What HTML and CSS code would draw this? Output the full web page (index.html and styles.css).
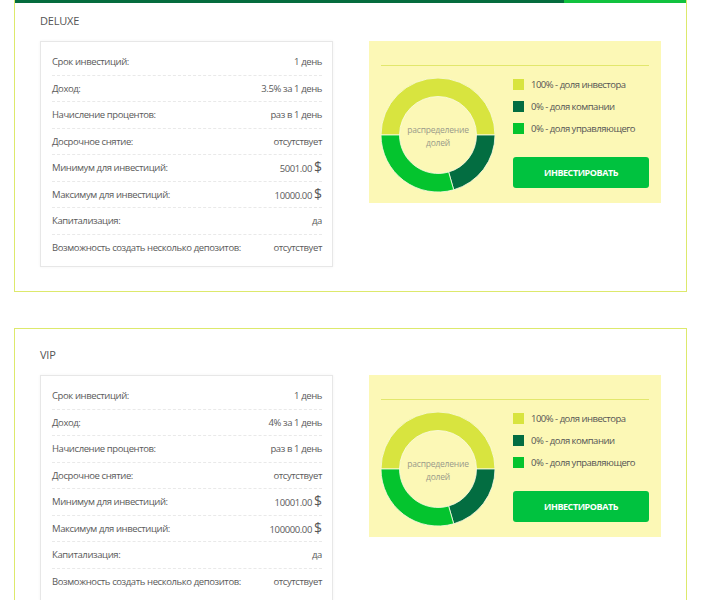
FILE: index.html
```html
<!DOCTYPE html>
<html lang="ru">
<head>
<meta charset="utf-8">
<title>Тарифы</title>
<link rel="stylesheet" href="styles.css">
</head>
<body>
<div class="page">
  <section class="card card-active">
    <div class="card-bar"></div>
    <h2 class="card-title">DELUXE</h2>
    <div class="card-body">
      <div class="specs">
        <div class="row"><span class="label">Срок инвестиций:</span><span class="value">1 день</span></div>
        <div class="row"><span class="label">Доход:</span><span class="value">3.5% за 1 день</span></div>
        <div class="row"><span class="label">Начисление процентов:</span><span class="value">раз в 1 день</span></div>
        <div class="row"><span class="label">Досрочное снятие:</span><span class="value">отсутствует</span></div>
        <div class="row"><span class="label">Минимум для инвестиций:</span><span class="value">5001.00 <span class="cur">$</span></span></div>
        <div class="row"><span class="label">Максимум для инвестиций:</span><span class="value">10000.00 <span class="cur">$</span></span></div>
        <div class="row"><span class="label">Капитализация:</span><span class="value">да</span></div>
        <div class="row"><span class="label">Возможность создать несколько депозитов:</span><span class="value">отсутствует</span></div>
      </div>
      <div class="share">
        <div class="share-head"></div>
        <div class="share-body">
          <div class="donut">
            <svg class="donut-svg" width="114" height="114" viewBox="0 0 114 114">
              <path class="seg-yellow" d="M0 57 A57 57 0 0 1 114 57 L95.5 57 A38.5 38.5 0 0 0 18.5 57 Z"/>
              <path class="seg-dark" d="M114 57 A57 57 0 0 1 72.71 111.79 L67.61 94.01 A38.5 38.5 0 0 0 95.5 57 Z"/>
              <path class="seg-green" d="M72.71 111.79 A57 57 0 0 1 0 57 L18.5 57 A38.5 38.5 0 0 0 67.61 94.01 Z"/>
            </svg>
            <div class="donut-label">распределение<br>долей</div>
          </div>
          <div class="share-side">
            <ul class="legend">
              <li><span class="sq sq-yellow"></span>100% - доля инвестора</li>
              <li><span class="sq sq-dark"></span>0% - доля компании</li>
              <li><span class="sq sq-green"></span>0% - доля управляющего</li>
            </ul>
            <button class="invest-btn" type="button">ИНВЕСТИРОВАТЬ</button>
          </div>
        </div>
      </div>
    </div>
  </section>

  <section class="card">
    <h2 class="card-title">VIP</h2>
    <div class="card-body">
      <div class="specs">
        <div class="row"><span class="label">Срок инвестиций:</span><span class="value">1 день</span></div>
        <div class="row"><span class="label">Доход:</span><span class="value">4% за 1 день</span></div>
        <div class="row"><span class="label">Начисление процентов:</span><span class="value">раз в 1 день</span></div>
        <div class="row"><span class="label">Досрочное снятие:</span><span class="value">отсутствует</span></div>
        <div class="row"><span class="label">Минимум для инвестиций:</span><span class="value">10001.00 <span class="cur">$</span></span></div>
        <div class="row"><span class="label">Максимум для инвестиций:</span><span class="value">100000.00 <span class="cur">$</span></span></div>
        <div class="row"><span class="label">Капитализация:</span><span class="value">да</span></div>
        <div class="row"><span class="label">Возможность создать несколько депозитов:</span><span class="value">отсутствует</span></div>
      </div>
      <div class="share">
        <div class="share-head"></div>
        <div class="share-body">
          <div class="donut">
            <svg class="donut-svg" width="114" height="114" viewBox="0 0 114 114">
              <path class="seg-yellow" d="M0 57 A57 57 0 0 1 114 57 L95.5 57 A38.5 38.5 0 0 0 18.5 57 Z"/>
              <path class="seg-dark" d="M114 57 A57 57 0 0 1 72.71 111.79 L67.61 94.01 A38.5 38.5 0 0 0 95.5 57 Z"/>
              <path class="seg-green" d="M72.71 111.79 A57 57 0 0 1 0 57 L18.5 57 A38.5 38.5 0 0 0 67.61 94.01 Z"/>
            </svg>
            <div class="donut-label">распределение<br>долей</div>
          </div>
          <div class="share-side">
            <ul class="legend">
              <li><span class="sq sq-yellow"></span>100% - доля инвестора</li>
              <li><span class="sq sq-dark"></span>0% - доля компании</li>
              <li><span class="sq sq-green"></span>0% - доля управляющего</li>
            </ul>
            <button class="invest-btn" type="button">ИНВЕСТИРОВАТЬ</button>
          </div>
        </div>
      </div>
    </div>
  </section>
</div>
</body>
</html>
```

FILE: styles.css
```css
* { box-sizing: border-box; }

html, body {
  margin: 0;
  padding: 0;
  background: #ffffff;
}

body {
  font-family: "Open Sans", "Liberation Sans", Arial, sans-serif;
  color: #555555;
  font-size: 10px;
}

.page {
  width: 673px;
  margin-left: 14px;
  display: flex;
  flex-direction: column;
  gap: 36px;
}

.card {
  border: 1px solid #dde96c;
  padding: 18px 25px 24px;
  background: #ffffff;
}

.card-active {
  border-top: 0;
  padding-top: 0;
}

.card-bar {
  height: 3px;
  margin: 0 -25px 10px;
  background: linear-gradient(to right, #056c3e 0, #056c3e 81.8%, #11c23f 81.8%, #11c23f 100%);
}

.card-title {
  margin: 0 0 12px;
  font-size: 11px;
  line-height: 16px;
  font-weight: 400;
  letter-spacing: -0.2px;
  color: #555555;
}

.card-body {
  display: grid;
  grid-template-columns: 293px 1fr;
  column-gap: 36px;
  align-items: start;
}

.specs {
  border: 1px solid #e7e7e7;
  box-shadow: 0 0 3px rgba(0, 0, 0, 0.05);
  padding: 7px 10px 6px 11px;
  background: #fff;
}

.row {
  height: 26.5px;
  display: flex;
  justify-content: space-between;
  align-items: center;
  border-bottom: 1px dashed #e9e9e9;
  font-size: 9.5px;
  letter-spacing: -0.4px;
  color: #5a5a5a;
}

.row:last-child {
  border-bottom: 0;
  height: 25.5px;
}

.value {
  white-space: nowrap;
}

.cur {
  font-size: 14px;
  letter-spacing: 0;
  color: #555;
  line-height: 1;
}

.share {
  background: #fcf8b6;
  padding: 0 12px 11px;
}

.share-head {
  height: 25px;
  border-bottom: 1px solid #e2e76c;
}

.share-body {
  margin-top: 12px;
  display: flex;
  gap: 18px;
  align-items: flex-start;
}

.donut {
  display: grid;
  width: 114px;
  height: 114px;
  flex: none;
}

.donut-svg,
.donut-label {
  grid-area: 1 / 1;
}

.donut-svg path {
  stroke: #fbfbe6;
  stroke-width: 0.8;
}

.seg-yellow { fill: #d8e43f; }
.seg-dark { fill: #036d41; }
.seg-green { fill: #04c42e; }

.donut-label {
  align-self: center;
  justify-self: center;
  text-align: center;
  font-size: 8.5px;
  letter-spacing: -0.2px;
  line-height: 13px;
  color: #9a9a8a;
  margin-top: 1px;
}

.share-side {
  flex: 1;
  display: flex;
  flex-direction: column;
}

.legend {
  list-style: none;
  margin: 0;
  padding: 0;
  display: flex;
  flex-direction: column;
  gap: 10px;
}

.legend li {
  display: flex;
  align-items: center;
  gap: 7px;
  height: 12px;
  font-size: 9.5px;
  letter-spacing: -0.5px;
  color: #555;
  white-space: nowrap;
}

.sq {
  width: 11px;
  height: 11px;
  flex: none;
}

.sq-yellow { background: #d8e43f; }
.sq-dark { background: #036d41; }
.sq-green { background: #04c42e; }

.invest-btn {
  margin-top: 23px;
  height: 31px;
  width: 100%;
  border: 0;
  border-radius: 3px;
  background: #00c23f;
  color: #ffffff;
  font-family: "Open Sans", "Liberation Sans", Arial, sans-serif;
  font-weight: 700;
  font-size: 9px;
  letter-spacing: -0.45px;
  padding: 0;
  cursor: pointer;
}
```
